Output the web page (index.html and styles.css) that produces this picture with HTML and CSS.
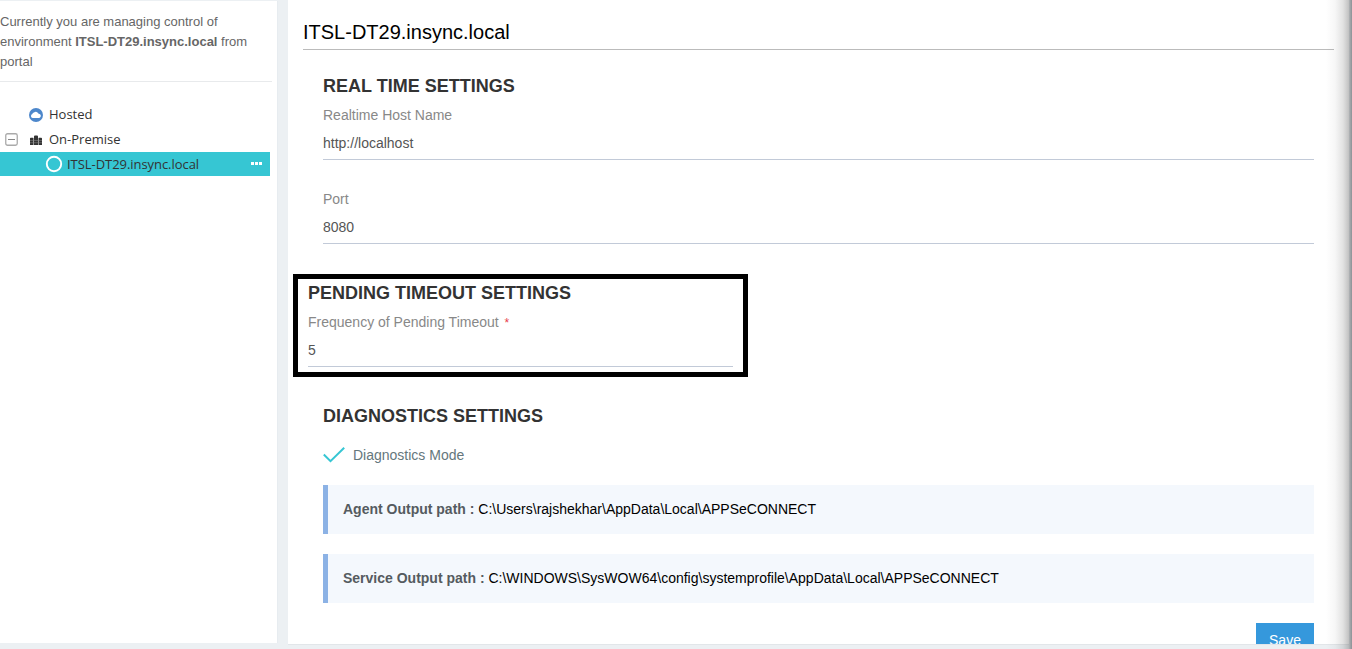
FILE: index.html
```html
<!DOCTYPE html>
<html lang="en">
<head>
<meta charset="utf-8">
<title>Environment settings</title>
<link rel="stylesheet" href="styles.css">
</head>
<body>
<div class="app">
  <aside class="sidebar">
    <p class="notice">Currently you are managing control of<br>environment <b>ITSL-DT29.insync.local</b> from<br>portal</p>
    <ul class="tree">
      <li class="node">
        <span class="toggle"></span>
        <svg class="icon" width="14" height="14" viewBox="0 0 14 14"><circle cx="7" cy="7" r="7" fill="#4d87cb"/><path d="M3.700 10a2 2 0 0 1-.3-3.900A1.600 1.600 0 0 1 5 4.600 2.800 2.800 0 0 1 9.600 5.700 2.200 2.200 0 0 1 10.300 10z" fill="#fff"/></svg>
        <span class="label">Hosted</span>
      </li>
      <li class="node">
        <span class="toggle"><svg width="13" height="13" viewBox="0 0 13 13" fill="none"><rect x=".75" y=".75" width="11.500" height="11.500" rx="1.800" stroke="#aaa" stroke-width="1.300"/><path d="M3 6.500h7" stroke="#888"/></svg></span>
        <svg class="icon" width="14" height="14" viewBox="0 0 14 14"><path d="M1 5.500q0-.8.800-.8h2.400V12H1zM5 3.500q0-1 1-1h2q1 0 1 1V12H5zM9.800 4.700h2.400q.8 0 .8.800V12H9.800z" fill="#333"/><path d="M4.200 5h.8v7h-.8zM9 5h.8v7H9z" fill="#888"/><path d="M1 7.500h12M1 9.700h12" stroke="#888" stroke-width=".5"/></svg>
        <span class="label">On-Premise</span>
      </li>
      <li class="node selected">
        <svg class="ring" width="18" height="18" viewBox="0 0 18 18"><circle cx="9" cy="9" r="7.200" fill="none" stroke="#fff" stroke-width="1.900"/></svg>
        <span class="env">ITSL-DT29.insync.local</span>
        <span class="more"><i></i><i></i><i></i></span>
      </li>
    </ul>
  </aside>
  <main class="panel">
    <h1 class="title">ITSL-DT29.insync.local</h1>
    <section class="realtime">
      <h2 class="heading">REAL TIME SETTINGS</h2>
      <div class="field host"><label>Realtime Host Name</label><div class="value">http://localhost</div></div>
      <div class="field"><label>Port</label><div class="value">8080</div></div>
    </section>
    <section class="pending">
      <h2 class="heading">PENDING TIMEOUT SETTINGS</h2>
      <div class="field"><label>Frequency of Pending Timeout <span class="required">*</span></label><div class="value">5</div></div>
    </section>
    <section class="diagnostics">
      <h2 class="heading">DIAGNOSTICS SETTINGS</h2>
      <div class="check"><svg width="22" height="16" viewBox="0 0 22 16"><path d="M.8 7.500 7.500 14.200 21.200.8" fill="none" stroke="#36c6d3" stroke-width="2"/></svg><span>Diagnostics Mode</span></div>
      <div class="path"><b>Agent Output path :</b> C:\Users\rajshekhar\AppData\Local\APPSeCONNECT</div>
      <div class="path"><b>Service Output path :</b> C:\WINDOWS\SysWOW64\config\systemprofile\AppData\Local\APPSeCONNECT</div>
      <button class="save">Save</button>
    </section>
  </main>
  <div class="edge-shadow"></div>
</div>
</body>
</html>
```
FILE: styles.css
```css
* { box-sizing: border-box; }
body { margin: 0; font-family: "Liberation Sans", Arial, sans-serif; font-size: 14px; color: #555; background: #ecf0f3; }
.app { position: relative; display: flex; gap: 10px; height: 649px; overflow: hidden; background: #ecf0f3; }
.sidebar { width: 278px; height: 642px; margin-top: 1px; border-right: 1px solid #e7ecf0; background: #fff; }
.notice { width: 272px; height: 81px; margin: 0; padding-top: 11px; border-bottom: 1px solid #e8eaec; font-size: 13px; line-height: 20px; color: #666; white-space: nowrap; }
.tree { width: 270px; margin: 20px 0 0; padding: 0; list-style: none; font-family: "Open Sans", "Noto Sans", sans-serif; font-size: 13px; color: #333; }
.node { display: flex; align-items: center; height: 25px; }
.toggle { display: flex; width: 29px; padding-left: 5px; }
.icon { margin-right: 6px; }
.label { padding-bottom: 2px; }
.env { letter-spacing: -.05px; }
.selected { height: 24px; padding: 0 8px 0 45px; background: #36c6d3; }
.ring { margin-right: 4px; }
.more { display: flex; margin-left: auto; padding-bottom: 1px; gap: 1px; }
.more i { width: 3px; height: 3px; background: #fff; }
.panel { width: 1061px; height: 645px; padding: 0 15px; overflow: hidden; border-bottom: 1px solid #e2e6e9; background: #fff; }
.title { height: 50px; margin: 0; padding-top: 20px; border-bottom: 1px solid #bbb; font-size: 20px; line-height: 24px; font-weight: 400; color: #000; }
.realtime { padding: 25px 20px 0; }
.heading { margin: 0; font-size: 18px; line-height: 22px; font-weight: 700; color: #333; }
.field { height: 63px; padding-top: 8px; border-bottom: 1px solid #c2cad8; }
.host { margin-bottom: 21px; }
.field label { display: block; height: 20px; line-height: 20px; color: #888; }
.value { margin-top: 8px; line-height: 20px; color: #555; }
.required { color: #e73d4a; font-size: 12px; line-height: 1; margin-left: 2px; }
.pending { width: 455px; height: 103px; margin: 30px 0 0 -10px; padding: 3px 10px; border: 5px solid #000; }
.diagnostics { padding: 28px 20px 0; }
.check { display: flex; align-items: center; gap: 8px; height: 22px; margin: 17px 0 19px; color: #65777c; }
.path { height: 49px; margin-bottom: 20px; padding-left: 15px; border-left: 5px solid #8cb2e5; background: #f4f8fd; line-height: 49px; color: #000; }
.path b { color: #555b60; }
.save { display: block; width: 58px; height: 34px; margin: 0 0 0 auto; padding: 0; border: 0; background: #3598dc; color: #fff; font: 14px "Liberation Sans", Arial, sans-serif; }
.edge-shadow { position: absolute; top: 0; right: 0; width: 26px; height: 649px; background: linear-gradient(90deg, rgba(110,110,110,0), rgba(110,110,110,.06) 35%, rgba(110,110,110,.2) 65%, rgba(110,110,110,.4) 86%, rgba(100,105,110,.7) 100%); }
```
